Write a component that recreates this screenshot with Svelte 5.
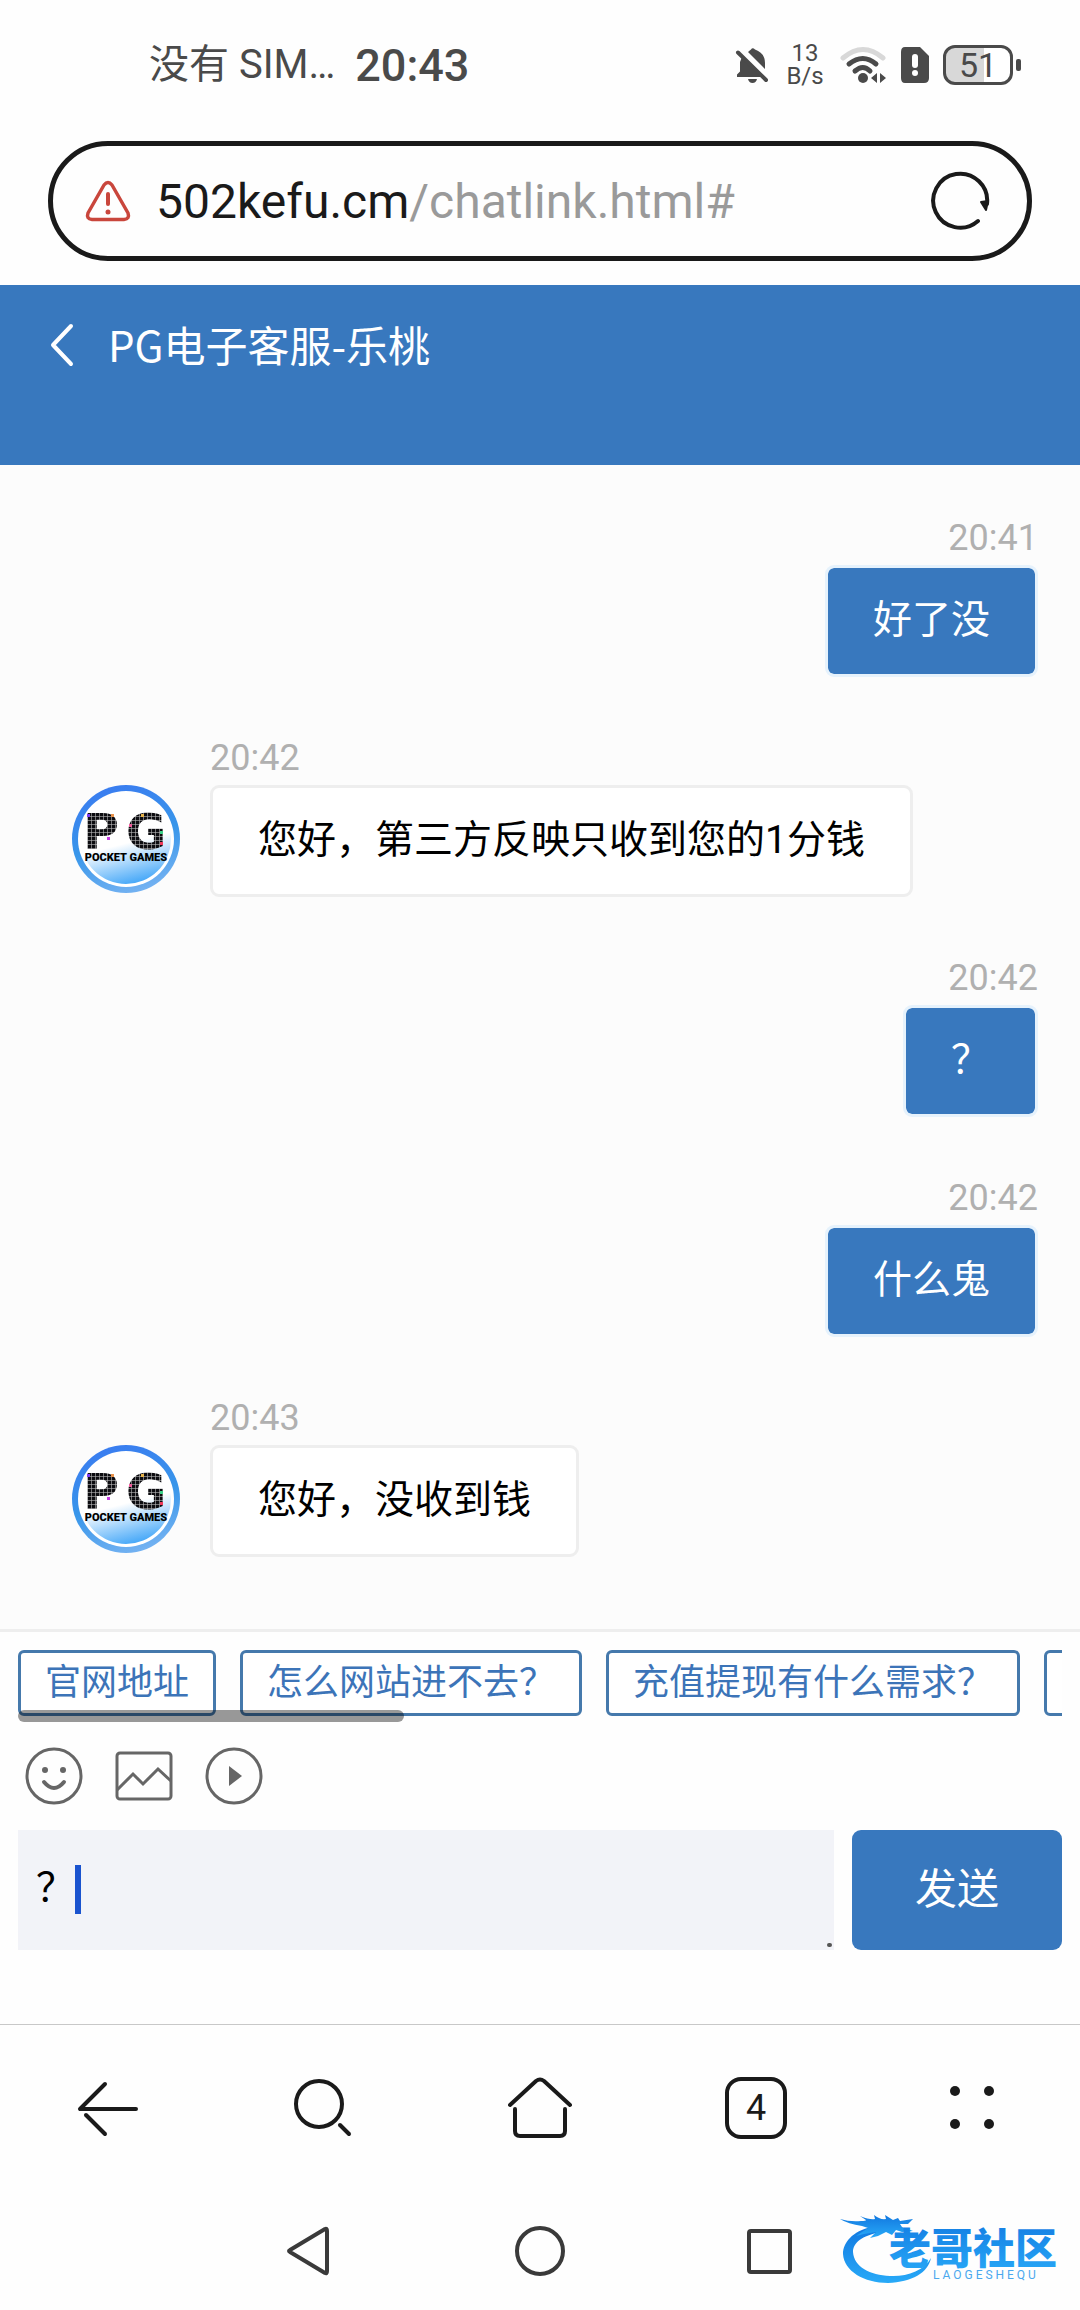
<script>
  const messages = [
    { id: 1, mine: true, time: '20:41', text: '好了没' },
    { id: 2, mine: false, time: '20:42', text: '您好，第三方反映只收到您的1分钱' },
    { id: 3, mine: true, time: '20:42', text: '？' },
    { id: 4, mine: true, time: '20:42', text: '什么鬼' },
    { id: 5, mine: false, time: '20:43', text: '您好，没收到钱' }
  ];
  const quickReplies = ['官网地址', '怎么网站进不去？', '充值提现有什么需求？'];
  let draft = $state('？');
</script>

<div class="screen">
  <div class="status">
    <div class="carrier">没有 SIM…</div>
    <div class="clock">20:43</div>
    <div class="indicators">
      <svg width="36" height="40" viewBox="0 0 36 40" fill="#4a4a4a">
        <path d="M7 12 L27 32 H2 V29.500 L5 26.500 V17 Z M13 7 Q15 5 16 4.500 Q17.500 2 20 4.500 Q30 8 30 18 V24 Z" />
        <path d="M3 7.500 L31 35" fill="none" stroke="#4a4a4a" stroke-width="4" stroke-linecap="round" />
        <path d="M13 34 H22 Q21 38 17.500 38 Q14 38 13 34 Z" />
      </svg>
      <div class="rate"><span>13</span><span>B/s</span></div>
      <svg width="48" height="40" viewBox="0 0 48 40" fill="none" stroke-linecap="round" stroke-width="5">
        <path d="M4 13 Q24 -4 44 13" stroke="#d8d8d8" />
        <path d="M10 19 Q24 8 37 19" stroke="#4a4a4a" />
        <path d="M16 26 Q24 19 31 26" stroke="#4a4a4a" />
        <circle cx="24" cy="33" r="5" fill="#4a4a4a" />
        <path d="M38 28 V38 L32 33 Z M41 28 V38 L47 33 Z" fill="#4a4a4a" />
      </svg>
      <svg width="30" height="40" viewBox="0 0 30 40">
        <path d="M5 2 H20 L29 11 V33 Q29 38 24 38 H5 Q1 38 1 33 V7 Q1 2 5 2 Z" fill="#4a4a4a" />
        <path d="M15 12 V20" stroke="#fff" stroke-width="6" stroke-linecap="round" />
        <circle cx="15" cy="28" r="3" fill="#fff" />
      </svg>
      <div class="battery"><span class="level">51</span></div>
    </div>
  </div>

  <div class="address">
    <svg width="46" height="42" viewBox="0 0 46 42" fill="none" stroke="#c9463c" stroke-width="4" stroke-linejoin="round" stroke-linecap="round">
      <path d="M19 5 Q23 0 27 5 L43 33 Q45 39 39 39.500 H7 Q1 39 3 33 Z" stroke-width="3.500" />
      <path d="M23 14 V24" />
      <circle cx="23" cy="32" r="2.500" fill="#c9463c" stroke="none" />
    </svg>
    <div class="url"><span>502kefu.cm</span><span class="path">/chatlink.html#</span></div>
    <button class="plain" aria-label="刷新">
      <svg width="60" height="60" viewBox="0 0 60 60" fill="none" stroke="#1a1a1a" stroke-width="4" stroke-linecap="round">
        <path d="M48 50 A27 27 0 1 1 57 33" />
        <path d="M51 31 L58 30 L56 39 Z" fill="#1a1a1a" stroke-width="2" stroke-linejoin="round" />
      </svg>
    </button>
  </div>

  <header class="title">
    <button class="plain" aria-label="返回">
      <svg width="26" height="44" viewBox="0 0 26 44" fill="none" stroke="#fff" stroke-width="4" stroke-linecap="round" stroke-linejoin="round">
        <path d="M22 3 L4 22 L22 41" />
      </svg>
    </button>
    <h1>PG电子客服-乐桃</h1>
  </header>

  <main class="chat">
    {#each messages as m (m.id)}
      <div class="message" class:mine={m.mine}>
        <time>{m.time}</time>
        {#if !m.mine}
          <svg class="avatar" viewBox="0 0 108 108">
            <defs>
              <linearGradient id="ring{m.id}" x1="0.400" y1="0" x2="0.700" y2="1">
                <stop offset="0" stop-color="#3a7df0" />
                <stop offset="0.500" stop-color="#3896ea" />
                <stop offset="1" stop-color="#78b4f2" />
              </linearGradient>
              <linearGradient id="disc{m.id}" x1="0.350" y1="0" x2="0.600" y2="1">
                <stop offset="0.550" stop-color="#fff" />
                <stop offset="1" stop-color="#42a6f8" />
              </linearGradient>
              <pattern id="dots{m.id}" width="4" height="4" patternUnits="userSpaceOnUse">
                <rect width="4" height="4" fill="#b8b8b8" />
                <rect width="3.400" height="3.400" fill="#0c0c10" />
              </pattern>
            </defs>
            <circle cx="54" cy="54" r="54" fill="url(#ring{m.id})" />
            <circle cx="54" cy="54" r="48" fill="#fff" />
            <circle cx="54" cy="54" r="45" fill="url(#disc{m.id})" />
            <text class="mark" x="11" y="64" fill="url(#dots{m.id})">P</text>
            <text class="mark" x="54" y="64" fill="url(#dots{m.id})">G</text>
            <rect x="15" y="29" width="3" height="3" fill="#7a3cf0" />
            <rect x="39" y="29" width="3" height="3" fill="#e8924a" />
            <rect x="35" y="52" width="3" height="3" fill="#c43ce0" />
            <rect x="57" y="39" width="3" height="3" fill="#f05a9a" />
            <rect x="69" y="29" width="3" height="3" fill="#e8b44a" />
            <rect x="88" y="46" width="3" height="3" fill="#3cd08a" />
            <rect x="88" y="57" width="3" height="3" fill="#f03c5a" />
            <text class="brand" x="54" y="76" text-anchor="middle">POCKET GAMES</text>
          </svg>
        {/if}
        <p class="bubble">{m.text}</p>
      </div>
    {/each}
  </main>

  <section class="composer">
    <div class="quick">
      <div class="chips">
        {#each quickReplies as q}
          <button class="chip">{q}</button>
        {/each}
        <button class="chip more" aria-label="更多"></button>
      </div>
      <div class="thumb"></div>
    </div>
    <div class="tools">
      <button class="plain" aria-label="表情">
        <svg width="60" height="60" viewBox="0 0 60 60" fill="none" stroke="#666" stroke-width="3">
          <circle cx="30" cy="30" r="27" />
          <circle cx="21" cy="24" r="3" fill="#666" stroke="none" />
          <circle cx="39" cy="24" r="3" fill="#666" stroke="none" />
          <path d="M20 36 Q30 48 40 36" stroke-linecap="round" stroke-width="4" />
        </svg>
      </button>
      <button class="plain" aria-label="图片">
        <svg width="60" height="60" viewBox="0 0 60 60" fill="none" stroke="#666" stroke-width="3">
          <rect x="3" y="7" width="54" height="46" rx="3" />
          <path d="M3 44 L19 28 L29 38 L44 23 L57 35" />
        </svg>
      </button>
      <button class="plain" aria-label="视频">
        <svg width="60" height="60" viewBox="0 0 60 60" fill="none" stroke="#666" stroke-width="3">
          <circle cx="30" cy="30" r="27" />
          <path d="M25 20 L38 30 L25 40 Z" fill="#666" stroke="none" />
        </svg>
      </button>
    </div>
    <div class="entry">
      <div class="field">
        <textarea aria-label="消息" rows="1" bind:value={draft}></textarea>
        <span class="caret"></span>
        <span class="grip"></span>
      </div>
      <button class="send">发送</button>
    </div>
  </section>

  <nav class="browser">
    <button class="plain" aria-label="后退">
      <svg width="64" height="64" viewBox="0 0 64 64" fill="none" stroke="#1a1a1a" stroke-width="4" stroke-linecap="round" stroke-linejoin="round">
        <path d="M29 8 L4 33 H60" />
        <path d="M10 39 L29 58" />
      </svg>
    </button>
    <button class="plain" aria-label="搜索">
      <svg width="64" height="64" viewBox="0 0 64 64" fill="none" stroke="#1a1a1a" stroke-width="4" stroke-linecap="round">
        <circle cx="27" cy="28" r="23" />
        <path d="M48 49 L57 58" />
      </svg>
    </button>
    <button class="plain" aria-label="主页">
      <svg width="64" height="64" viewBox="0 0 64 64" fill="none" stroke="#1a1a1a" stroke-width="4" stroke-linecap="round" stroke-linejoin="round">
        <path d="M2 29 L28 5 Q32 2 36 5 L62 29" />
        <path d="M7 33 V55 Q7 60 12 60 H52 Q57 60 57 55 V33" />
      </svg>
    </button>
    <button class="tabs" aria-label="标签页">4</button>
    <button class="plain" aria-label="菜单">
      <svg width="64" height="64" viewBox="0 0 64 64" fill="#1a1a1a">
        <circle cx="15" cy="15" r="5" /><circle cx="49" cy="15" r="5" />
        <circle cx="15" cy="48" r="5" /><circle cx="49" cy="48" r="5" />
      </svg>
    </button>
  </nav>

  <nav class="system">
    <button class="plain" aria-label="系统返回">
      <svg width="56" height="56" viewBox="0 0 56 56" fill="none" stroke="#3a3a3a" stroke-width="4" stroke-linejoin="round">
        <path d="M43 6 Q45 5 45 8 V48 Q45 51 43 50 L8 29 Q6 28 8 27 Z" />
      </svg>
    </button>
    <button class="plain" aria-label="系统主页">
      <svg width="56" height="56" viewBox="0 0 56 56" fill="none" stroke="#3a3a3a" stroke-width="4">
        <circle cx="28" cy="28" r="23" />
      </svg>
    </button>
    <button class="plain" aria-label="最近任务">
      <svg width="56" height="56" viewBox="0 0 56 56" fill="none" stroke="#3a3a3a" stroke-width="4">
        <rect x="7" y="8" width="41" height="41" rx="2" />
      </svg>
    </button>
    <svg class="community" width="226" height="76" viewBox="0 0 226 76">
      <defs>
        <linearGradient id="blue" x1="0" y1="0" x2="0" y2="1">
          <stop offset="0" stop-color="#1278e0" />
          <stop offset="1" stop-color="#28aaf8" />
        </linearGradient>
      </defs>
      <g fill="url(#blue)">
        <path d="M32 14 C12 18 3 30 3 41 C4 58 24 70 48 70 C72 69 88 60 91 45 C84 58 66 64 50 63 C30 62 14 54 13 39 C13 30 22 22 42 19 Z" />
        <path d="M0 6 Q10 9 21 8 Q26 8 26 7 L20 3 Q30 7 35 6 L34 2 Q40 7 46 6 L45 2 L53 7 L58 5 L60 8 L73 6 L68 11 L60 11 L62 14 L73 18 L62 19 L56 17 L52 22 L46 19 L38 23 L30 25 L36 19 L24 21 L16 23 L28 15 L22 13 Q8 11 0 6 Z" />
      </g>
      <text class="community-name" x="49" y="51" fill="url(#blue)">老哥社区</text>
      <text class="community-sub" x="93" y="66">L A O G E S H E Q U</text>
    </svg>
  </nav>
</div>

<style>
  :global(body) {
    margin: 0;
    background: #fff;
  }
  .screen {
    background: #fefefe;
    font-family: Roboto, 'Noto Sans CJK SC', sans-serif;
    color: #000;
  }
  button {
    font-family: inherit;
    cursor: pointer;
  }
  svg {
    display: block;
    flex: none;
  }
  .plain {
    padding: 0;
    border: 0;
    background: none;
  }
  .status {
    display: flex;
    align-items: center;
    height: 130px;
    padding: 0 67px 0 149px;
    color: #4a4a4a;
  }
  .carrier {
    font-size: 40px;
    line-height: 52px;
  }
  .clock {
    margin-left: 20px;
    font-size: 45px;
    font-weight: 500;
  }
  .indicators {
    display: flex;
    align-items: center;
    gap: 13px;
    margin-left: auto;
  }
  .rate {
    display: flex;
    flex-direction: column;
    align-items: center;
    width: 42px;
    font-size: 24px;
    line-height: 23px;
  }
  .battery {
    position: relative;
    box-sizing: border-box;
    width: 70px;
    height: 40px;
    border: 3px solid #4a4a4a;
    border-radius: 12px;
    background: linear-gradient(90deg, #d8d8d8 60%, #fff 60%);
    text-align: center;
    font-size: 34px;
    line-height: 35px;
  }
  .battery::after {
    content: '';
    position: absolute;
    right: -11px;
    top: 11px;
    width: 5px;
    height: 12px;
    border-radius: 2px;
    background: #4a4a4a;
  }
  .address {
    display: flex;
    align-items: center;
    box-sizing: border-box;
    height: 120px;
    margin: 11px 48px 24px;
    padding: 0 37px 0 32px;
    border: 5px solid #1a1a1a;
    border-radius: 60px;
  }
  .url {
    flex: 1;
    margin-left: 25px;
    font-size: 48px;
    color: #1a1a1a;
  }
  .path {
    color: #9a9a9a;
  }
  .title {
    display: flex;
    align-items: flex-start;
    gap: 33px;
    box-sizing: border-box;
    height: 180px;
    padding: 38px 49px;
    background: #3878be;
    color: #fff;
  }
  h1 {
    margin: 0;
    font-family: 'Noto Sans CJK SC', sans-serif;
    font-size: 42px;
    font-weight: 400;
    line-height: 42px;
  }
  .chat {
    display: flex;
    flex-direction: column;
    gap: 54px;
    padding: 46px 42px 72px 72px;
    background: #fcfcfc;
    border-bottom: 3px solid #eee;
  }
  .message {
    display: grid;
    grid-template-columns: 108px auto;
    column-gap: 30px;
    justify-content: start;
  }
  .message.mine {
    grid-template-columns: auto;
    justify-content: end;
  }
  time {
    grid-column: -2;
    height: 54px;
    font-size: 36px;
    line-height: 54px;
    color: #b0b0b0;
  }
  .mine time {
    text-align: right;
  }
  .avatar {
    width: 108px;
    height: 108px;
    grid-column: 1;
  }
  .mark {
    font-family: 'DejaVu Sans', sans-serif;
    font-size: 49px;
    font-weight: 700;
  }
  .brand {
    font-size: 11px;
    font-weight: 900;
  }
  .bubble {
    box-sizing: border-box;
    justify-self: start;
    margin: 0;
    padding: 24px 45px 26px;
    border: 3px solid #eee;
    border-radius: 9px;
    background: #fff;
    font-size: 39px;
    line-height: 56px;
  }
  .mine .bubble {
    justify-self: end;
    border-color: #e6f2fc;
    background: #3878be;
    background-clip: padding-box;
    color: #fff;
  }
  .composer {
    padding: 18px 18px 74px;
  }
  .quick {
    position: relative;
    padding-bottom: 6px;
  }
  .chips {
    display: flex;
    gap: 24px;
    overflow: hidden;
  }
  .chip {
    flex: none;
    height: 66px;
    padding: 0 24px;
    border: 3px solid #4579ac;
    border-radius: 6px;
    background: #fff;
    color: #3c74b8;
    font-size: 36px;
    line-height: 54px;
  }
  .more {
    width: 198px;
  }
  .thumb {
    position: absolute;
    left: 0;
    bottom: 0;
    width: 37%;
    height: 12px;
    border-radius: 6px;
    background: rgba(0, 0, 0, 0.4);
  }
  .tools {
    display: flex;
    gap: 30px;
    padding: 24px 6px;
  }
  .entry {
    display: flex;
    gap: 18px;
  }
  .field {
    position: relative;
    flex: 1;
    display: flex;
  }
  textarea {
    flex: 1;
    box-sizing: border-box;
    height: 120px;
    padding: 30px 18px;
    border: 0;
    outline: 0;
    resize: none;
    overflow: hidden;
    background: #f2f3f8;
    font-family: inherit;
    font-size: 39px;
    line-height: 56px;
    color: #000;
  }
  .caret {
    position: absolute;
    left: 57px;
    top: 35px;
    width: 6px;
    height: 49px;
    background: #1a53cf;
  }
  .grip {
    position: absolute;
    right: 2px;
    bottom: 3px;
    width: 5px;
    height: 4px;
    border-radius: 2px;
    background: #555;
  }
  .send {
    width: 210px;
    padding: 0 0 10px;
    border: 0;
    border-radius: 9px;
    background: #3878be;
    color: #fff;
    font-size: 42px;
  }
  .browser {
    display: grid;
    grid-template-columns: repeat(5, 1fr);
    place-items: center;
    padding: 51px 0;
    border-top: 1px solid #c8c8c8;
  }
  .tabs {
    width: 62px;
    height: 62px;
    padding: 0;
    border: 4px solid #1a1a1a;
    border-radius: 16px;
    background: none;
    color: #1a1a1a;
    font-size: 36px;
    line-height: 54px;
  }
  .system {
    position: relative;
    display: flex;
    justify-content: center;
    gap: 174px;
    padding: 32px 0 31px;
  }
  .community {
    position: absolute;
    right: 14px;
    top: 22px;
  }
  .community-name {
    font-family: 'Noto Sans CJK SC', sans-serif;
    font-size: 42px;
    font-weight: 900;
  }
  .community-sub {
    font-size: 12px;
    fill: #4aa8ee;
  }
</style>
